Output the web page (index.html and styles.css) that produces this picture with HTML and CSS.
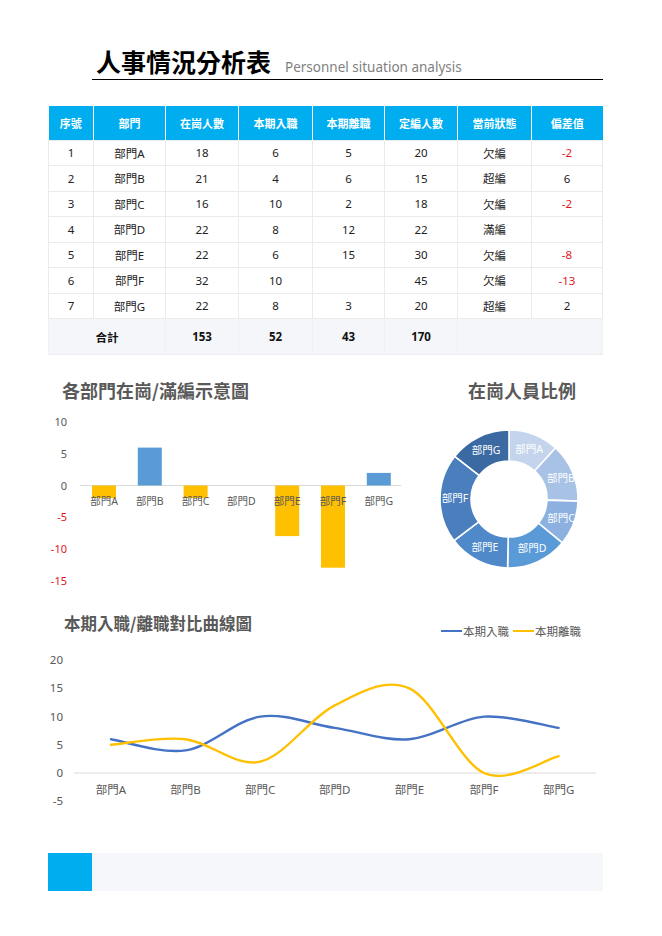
FILE: index.html
```html
<!DOCTYPE html>
<html lang="zh-Hant">
<head>
<meta charset="utf-8">
<title>人事情況分析表</title>
<link rel="stylesheet" href="styles.css">
</head>
<body>
<div class="page">
  <header class="header">
    <h1 class="title">人事情況分析表</h1>
    <span class="subtitle">Personnel situation analysis</span>
  </header>

  <table class="data">
    <colgroup>
      <col class="c-no"><col class="c-a"><col class="c-b"><col class="c-c"><col class="c-a"><col class="c-b"><col class="c-c"><col class="c-d">
    </colgroup>
    <thead>
      <tr><th>序號</th><th>部門</th><th>在崗人數</th><th>本期入職</th><th>本期離職</th><th>定編人數</th><th>當前狀態</th><th>偏差值</th></tr>
    </thead>
    <tbody>
      <tr><td>1</td><td>部門A</td><td>18</td><td>6</td><td>5</td><td>20</td><td>欠編</td><td class="neg">-2</td></tr>
      <tr><td>2</td><td>部門B</td><td>21</td><td>4</td><td>6</td><td>15</td><td>超編</td><td>6</td></tr>
      <tr><td>3</td><td>部門C</td><td>16</td><td>10</td><td>2</td><td>18</td><td>欠編</td><td class="neg">-2</td></tr>
      <tr><td>4</td><td>部門D</td><td>22</td><td>8</td><td>12</td><td>22</td><td>滿編</td><td></td></tr>
      <tr><td>5</td><td>部門E</td><td>22</td><td>6</td><td>15</td><td>30</td><td>欠編</td><td class="neg">-8</td></tr>
      <tr><td>6</td><td>部門F</td><td>32</td><td>10</td><td></td><td>45</td><td>欠編</td><td class="neg">-13</td></tr>
      <tr><td>7</td><td>部門G</td><td>22</td><td>8</td><td>3</td><td>20</td><td>超編</td><td>2</td></tr>
      <tr class="total"><td colspan="2">合計</td><td>153</td><td>52</td><td>43</td><td>170</td><td colspan="2"></td></tr>
    </tbody>
  </table>

  <section class="charts">
    <div class="bar-panel">
      <h2 class="chart-title bar-title">各部門在崗/滿編示意圖</h2>
      <svg class="chart" width="362" height="190" viewBox="48 402 362 190">
        <g class="ylab">
          <text x="67" y="425">10</text>
          <text x="67" y="456.6">5</text>
          <text x="67" y="488.5">0</text>
          <text x="67" y="520" class="red">-5</text>
          <text x="67" y="552" class="red">-10</text>
          <text x="67" y="583.6" class="red">-15</text>
        </g>
        <line x1="80" y1="484.5" x2="401" y2="484.5" class="axis"/>
        <rect x="92" y="484.5" width="24" height="12.6" class="bar-neg"/>
        <rect x="137.8" y="446.6" width="24" height="37.9" class="bar-pos"/>
        <rect x="183.6" y="484.5" width="24" height="12.6" class="bar-neg"/>
        <rect x="275.2" y="484.5" width="24" height="50.6" class="bar-neg"/>
        <rect x="321" y="484.5" width="24" height="82.2" class="bar-neg"/>
        <rect x="366.8" y="471.9" width="24" height="12.6" class="bar-pos"/>
        <g class="cat">
          <text x="104" y="504">部門A</text>
          <text x="149.8" y="504">部門B</text>
          <text x="195.6" y="504">部門C</text>
          <text x="241.4" y="504">部門D</text>
          <text x="287.2" y="504">部門E</text>
          <text x="333" y="504">部門F</text>
          <text x="378.8" y="504">部門G</text>
        </g>
      </svg>
    </div>
    <div class="donut-panel">
      <h2 class="chart-title donut-title">在崗人員比例</h2>
      <svg class="chart" width="193" height="190" viewBox="410 402 193 190">
        <g class="ring">
          <path class="s-a" d="M509,429 A69,69 0 0 1 555.49,447.01 L534.60,469.92 A38,38 0 0 0 509,460 Z"/>
          <path class="s-b" d="M555.49,447.01 A69,69 0 0 1 577.97,500.13 L546.98,499.17 A38,38 0 0 0 534.60,469.92 Z"/>
          <path class="s-c" d="M577.97,500.13 A69,69 0 0 1 562.31,541.81 L538.36,522.13 A38,38 0 0 0 546.98,499.17 Z"/>
          <path class="s-d" d="M562.31,541.81 A69,69 0 0 1 507.58,566.99 L508.22,535.99 A38,38 0 0 0 538.36,522.13 Z"/>
          <path class="s-e" d="M507.58,566.99 A69,69 0 0 1 453.94,539.58 L478.68,520.90 A38,38 0 0 0 508.22,535.99 Z"/>
          <path class="s-f" d="M453.94,539.58 A69,69 0 0 1 454.80,455.30 L479.15,474.48 A38,38 0 0 0 478.68,520.90 Z"/>
          <path class="s-g" d="M454.80,455.30 A69,69 0 0 1 509,429 L509,460 A38,38 0 0 0 479.15,474.48 Z"/>
        </g>
        <g class="dlab">
          <text x="529" y="452">部門A</text>
          <text x="561" y="481">部門B</text>
          <text x="561" y="521">部門C</text>
          <text x="532" y="551">部門D</text>
          <text x="485" y="550">部門E</text>
          <text x="455" y="501">部門F</text>
          <text x="486" y="453">部門G</text>
        </g>
      </svg>
    </div>
  </section>

  <section class="line-section">
    <div class="line-head">
      <h2 class="chart-title line-title">本期入職/離職對比曲線圖</h2>
      <div class="legend">
        <span class="key key-blue"></span><span class="key-text">本期入職</span>
        <span class="key key-yellow"></span><span class="key-text">本期離職</span>
      </div>
    </div>
    <svg class="chart" width="555" height="180" viewBox="48 640 555 180">
      <g class="ylab ylab-l">
        <text x="63" y="663">20</text>
        <text x="63" y="691.2">15</text>
        <text x="63" y="719.6">10</text>
        <text x="63" y="747.8">5</text>
        <text x="63" y="776">0</text>
        <text x="63" y="804.2">-5</text>
      </g>
      <line x1="74" y1="772" x2="596" y2="772" class="axis"/>
      <path class="ln ln-blue" d="M111,738.2 C123.43,740.07 160.73,753.17 185.6,749.4 C210.47,745.63 235.33,719.35 260.2,715.6 C285.07,711.85 309.93,723.13 334.8,726.9 C359.67,730.67 384.53,740.08 409.4,738.2 C434.27,736.32 459.13,717.48 484,715.6 C508.87,713.72 546.17,725.02 558.6,726.9"/>
      <path class="ln ln-yellow" d="M111,743.8 C123.43,742.87 160.73,735.38 185.6,738.2 C210.47,741.02 235.33,766.35 260.2,760.7 C285.07,755.05 309.93,716.52 334.8,704.3 C359.67,692.08 384.53,676.12 409.4,687.4 C434.27,698.68 459.13,760.72 484,772 C508.87,783.28 546.17,757.92 558.6,755.1"/>
      <g class="cat cat-l">
        <text x="111" y="793">部門A</text>
        <text x="185.6" y="793">部門B</text>
        <text x="260.2" y="793">部門C</text>
        <text x="334.8" y="793">部門D</text>
        <text x="409.4" y="793">部門E</text>
        <text x="484" y="793">部門F</text>
        <text x="558.6" y="793">部門G</text>
      </g>
    </svg>
  </section>

  <footer class="footer">
    <div class="foot-mark"></div>
    <div class="foot-bar"></div>
  </footer>
</div>
</body>
</html>
```

FILE: styles.css
```css
* { box-sizing: border-box; }

body {
  margin: 0;
  width: 662px;
  background: #fff;
  color: #222;
  font-family: "Noto Sans", "Noto Sans CJK TC", sans-serif;
}

.page {
  padding: 0 59px 0 48px;
}

/* Header */
.header {
  margin: 0 0 0 44px;
  height: 80px;
  padding: 46px 0 0 4px;
  border-bottom: 1px solid #000;
  display: flex;
  align-items: baseline;
}

.title {
  margin: 0;
  font-family: "Noto Sans CJK TC", sans-serif;
  font-weight: 700;
  font-size: 25px;
  line-height: 30px;
  color: #000;
}

.subtitle {
  margin-left: 14px;
  font-family: "Noto Sans", sans-serif;
  font-size: 13.5px;
  color: #7f7f7f;
}

/* Table */
.data {
  margin-top: 26px;
  width: 554px;
  border-collapse: collapse;
  table-layout: fixed;
  font-size: 11.5px;
}

.c-no { width: 45px; }
.c-a { width: 72px; }
.c-b { width: 73px; }
.c-c { width: 74px; }
.c-d { width: 71px; }

.data th {
  height: 34px;
  padding: 0;
  background: #00aeef;
  color: #fff;
  font-family: "Noto Sans CJK TC", sans-serif;
  font-weight: 700;
  font-size: 11px;
  border-left: 1px solid #fff;
  text-align: center;
}

.data th:first-child { border-left: 0; }

.data td {
  height: 25.5px;
  padding: 0;
  text-align: center;
  border: 1px solid #ebebeb;
  color: #222;
}

.data td.neg { color: #e3141f; }

.data tr.total td {
  height: 36px;
  background: #f4f6f9;
  font-weight: 700;
  color: #111;
  border-color: #eef0f3;
}

/* Charts */
.charts {
  display: flex;
}

.chart-title {
  margin: 0;
  font-family: "Noto Sans CJK TC", sans-serif;
  font-weight: 700;
  color: #595959;
  white-space: nowrap;
}

.bar-panel { width: 362px; }
.donut-panel { width: 193px; }

.bar-title, .donut-title {
  margin-top: 22px;
  font-size: 18px;
  line-height: 26px;
}

.bar-title { padding-left: 14px; }
.donut-title { padding-left: 58px; }

.chart { display: block; }

.chart text {
  font-family: "Noto Sans", "Noto Sans CJK TC", sans-serif;
}

.ylab text {
  font-size: 11px;
  fill: #595959;
  text-anchor: end;
}

.ylab text.red { fill: #e3141f; }

.ylab-l text { font-size: 11.5px; }

.axis {
  stroke: #d9d9d9;
  stroke-width: 1;
}

.bar-pos { fill: #5b9bd5; }
.bar-neg { fill: #ffc000; }

.cat text {
  font-size: 10.5px;
  fill: #595959;
  text-anchor: middle;
}

.cat-l text { font-size: 11.5px; }

.ring path {
  stroke: #fff;
  stroke-width: 1.6;
}

.s-a { fill: #c4d4ec; }
.s-b { fill: #a8c2e6; }
.s-c { fill: #8cb0df; }
.s-d { fill: #5a9ad7; }
.s-e { fill: #4f89c9; }
.s-f { fill: #4a7ebd; }
.s-g { fill: #3b6aa3; }

.dlab text {
  font-size: 10.5px;
  fill: #fff;
  text-anchor: middle;
}

/* Line chart */
.line-section { margin-top: 18px; }

.line-head {
  height: 30px;
  display: flex;
  justify-content: space-between;
  align-items: flex-start;
}

.line-title {
  padding-left: 16px;
  font-size: 16.5px;
  line-height: 24px;
}

.legend {
  margin: 12px 22px 0 0;
  display: flex;
  align-items: center;
  font-family: "Noto Sans CJK TC", sans-serif;
  font-size: 11.5px;
  line-height: 16px;
  color: #595959;
}

.key {
  width: 21px;
  height: 2.5px;
  margin-right: 1px;
}

.key-blue { background: #4472c4; }
.key-yellow { background: #ffc000; margin-left: 4px; }

.ln {
  fill: none;
  stroke-width: 2.4;
  stroke-linecap: round;
}

.ln-blue { stroke: #4472c4; }
.ln-yellow { stroke: #ffc000; }

/* Footer */
.footer {
  margin-top: 32px;
  height: 38px;
  display: flex;
}

.foot-mark {
  width: 44px;
  background: #00aeef;
}

.foot-bar {
  flex: 1;
  background: #f5f7fa;
}
```
